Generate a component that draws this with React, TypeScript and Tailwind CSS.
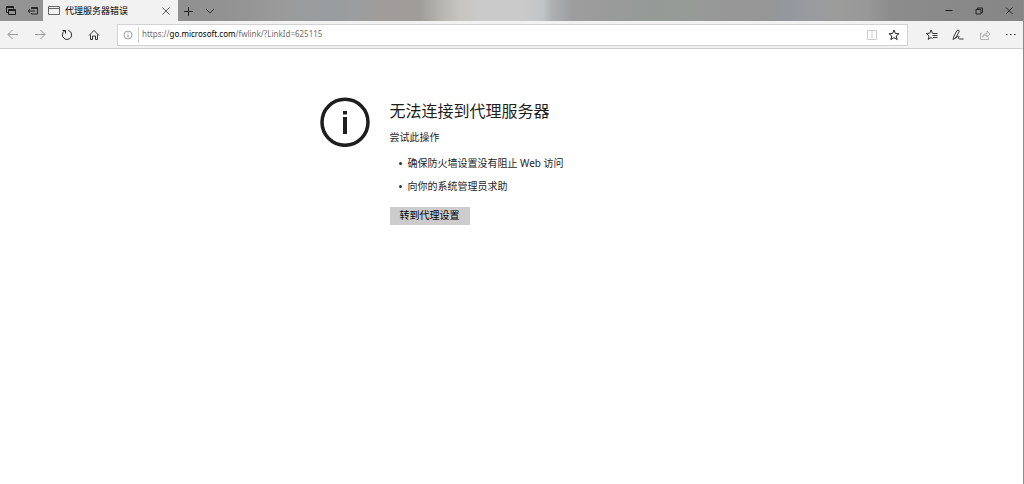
import React from "react";

interface IconProps {
	label: string;
	className?: string;
	disabled?: boolean;
	children: React.ReactNode;
}

const IconButton: React.FC<IconProps> = ({ label, className = "", disabled = false, children }) => (
	<button
		type="button"
		aria-label={label}
		disabled={disabled}
		className={`flex items-center justify-center shrink-0 ${className}`}
	>
		<svg width="12" height="12" viewBox="0 0 12 12" fill="none" stroke="currentColor" aria-hidden="true">
			{children}
		</svg>
	</button>
);

const TitleBar: React.FC = () => (
	<div className="flex h-[21px] text-[#1c1c1c] bg-[linear-gradient(90deg,#949494_0%,#909090_17%,#929292_22%,#9b9b9b_28%,#999da0_33%,#9f9c9b_37%,#9f9d9a_41%,#b5b4ae_43%,#c6c5c0_45%,#cacaca_47%,#cacaca_51%,#c2c5c7_53%,#acafb1_54%,#9d9d9e_56%,#9a9b9a_59%,#959a97_64%,#969b98_67%,#979797_71%,#969696_75%,#95979f_77%,#999ba0_79%,#9c9c9b_82%,#979797_85%,#8c8c8c_87%,#868686_100%)]">
		<IconButton label="Tabs you've set aside" className="w-[22px]">
			<path d="M3.500 7.500H1.500V1.500H8.500V3.500M1.500 2.500H8.500" />
			<path d="M3.500 4.500H10.500V9.500H3.500ZM3.500 5.500H10.500" />
		</IconButton>
		<IconButton label="Set these tabs aside" className="w-[21px]">
			<path strokeWidth="0.900" d="M4.500 4V2.500H10.500V9H4.500V8M4.500 3.500H10.500M1 6H8M3 4L1 6L3 8" />
		</IconButton>
		<div className="flex items-center w-[135px] bg-[#f2f2f2]">
			<span className="flex w-[22px] justify-center shrink-0">
				<svg width="12" height="12" viewBox="0 0 12 12" fill="none" stroke="#666" aria-hidden="true">
					<path d="M0.500 1.500H11.500V9.500H0.500ZM0.500 3.500H11.500" />
				</svg>
			</span>
			<span className="flex-1 text-[9px] leading-3 whitespace-nowrap text-black">代理服务器错误</span>
			<IconButton label="Close tab" className="w-6 text-[#333]">
				<path strokeWidth="0.800" d="M2.500 2.500L9.500 9.500M9.500 2.500L2.500 9.500" />
			</IconButton>
		</div>
		<IconButton label="New tab" className="w-[21px]">
			<path strokeWidth="0.900" d="M5.500 2V11M1 6.500H10" />
		</IconButton>
		<IconButton label="Show tab previews" className="w-[21px]">
			<path strokeWidth="0.800" d="M2 4L6 8L10 4" />
		</IconButton>
		<div className="flex-1" />
		<IconButton label="Minimize" className="w-[30px]">
			<path d="M2.500 5.500H9.500" />
		</IconButton>
		<IconButton label="Restore" className="w-[30px]">
			<path strokeWidth="0.900" d="M3 4.500H8V9H3ZM4.500 4.500V3H9.500V7.500H8" />
		</IconButton>
		<IconButton label="Close window" className="w-[29px]">
			<path strokeWidth="0.900" d="M3 2.500L9.500 9M9.500 2.500L3 9" />
		</IconButton>
	</div>
);

const AddressBar: React.FC = () => (
	<div className="flex flex-1 min-w-0 items-center h-[22px] mr-3 bg-white border border-[#d2d2d2]">
		<IconButton label="Site information" className="w-[21px] h-4 border-r border-[#cfcfcf] text-[#888]">
			<circle cx="6" cy="6" r="4" strokeWidth="0.800" />
			<path strokeWidth="0.900" d="M6 5.500V8.500M6 3.500V4.500" />
		</IconButton>
		<a
			href="https://go.microsoft.com/fwlink/?LinkId=625115"
			className="flex-1 min-w-0 pl-[3px] pb-0.5 text-[8px] leading-3 whitespace-nowrap text-[#707070] font-['Noto_Sans',sans-serif]"
		>
			https://<span className="text-black">go.microsoft.com</span>/fwlink/?LinkId=625115
		</a>
		<IconButton label="Reading view" disabled className="w-[22px] text-[#cccccc]">
			<path d="M1.500 1.500H10.500V10.500H1.500ZM6 1.500V10.500" />
		</IconButton>
		<IconButton label="Add to favorites" className="w-[22px] mr-0.5">
			<path d="M6 1L7.400 4.500L11 4.700L8.200 7L9.200 10.600L6 8.600L2.800 10.600L3.800 7L1 4.700L4.600 4.500Z" />
		</IconButton>
	</div>
);

const Toolbar: React.FC = () => (
	<div className="flex items-center h-7 bg-[#f2f2f2] border-b border-[#cfcfcf] text-[#222]">
		<IconButton label="Back" disabled className="w-[26px] text-[#909090]">
			<path strokeWidth="0.900" d="M11 5.500H1M5.500 1L1 5.500L5.500 10" />
		</IconButton>
		<IconButton label="Forward" disabled className="w-[27px] text-[#909090]">
			<path strokeWidth="0.900" d="M1 5.500H11M6.500 1L11 5.500L6.500 10" />
		</IconButton>
		<IconButton label="Refresh" className="w-[27px]">
			<path d="M7.500 1.500A4.600 4.600 0 1 1 3.500 2M1.500 1.500H4.500V4.500" />
		</IconButton>
		<IconButton label="Home" className="w-[27px] mr-[10px]">
			<path strokeWidth="0.900" d="M1 6.500L6 1.500L11 6.500M2.500 5.500V10.500H4.500V7H7.500V10.500H9.500V5.500" />
		</IconButton>
		<AddressBar />
		<IconButton label="Favorites hub" className="w-[23px]">
			<path
				strokeWidth="0.900"
				d="M7.500 4.500L6.500 4.200L5 1L3.800 4.200L0.500 4.500L3 7L2.200 10.500L5 8.500L6.500 9.500M6.500 4.500H11.500M6.500 6.500H11.500M7 8.500H11.500"
			/>
		</IconButton>
		<IconButton label="Add notes" className="w-[30px]">
			<path
				strokeWidth="0.900"
				d="M1 10.500L2 7L5 1.500Q6 0.500 7 1.500Q7.500 2 7 3L3.500 9L1 10.500M3.500 9.500Q6.500 6 7 7.500Q5.500 10 7.500 10H11.500"
			/>
		</IconButton>
		<IconButton label="Share" disabled className="w-[23px] text-[#a8a8a8]">
			<path
				strokeWidth="0.900"
				d="M3 4H1.500V10.500H9.500V8.500M3.500 8Q4 4.500 8 4.500V2L11 5L8 8V6Q5 6 3.500 8Z"
			/>
		</IconButton>
		<IconButton label="Settings and more" className="w-[27px]">
			<path d="M2 5.500H3.500M6 5.500H7.500M10 5.500H11.500" />
		</IconButton>
	</div>
);

const tips = ["确保防火墙设置没有阻止 Web 访问", "向你的系统管理员求助"];

const ErrorPage: React.FC = () => (
	<main className="flex w-full max-w-96 mx-auto pt-12 gap-5">
		<svg className="shrink-0 size-[50px]" viewBox="0 0 50 50" fill="none" aria-hidden="true">
			<circle cx="25" cy="25.300" r="23" stroke="#1e1e1e" strokeWidth="3.500" />
			<path d="M23 14H27V17.500H23ZM23 20H27V37H23Z" fill="#1e1e1e" />
		</svg>
		<div className="flex-1">
			<h1 className="mt-0.5 text-[16px] leading-6">无法连接到代理服务器</h1>
			<p className="mt-1.5 text-[10px] leading-4">尝试此操作</p>
			<ul className="mt-2.5 ml-[9px] text-[10px] leading-4 font-['Noto_Sans','Noto_Sans_CJK_SC',sans-serif]">
				{tips.map((tip) => (
					<li key={tip} className="flex items-center gap-1.5 mb-[7px]">
						<span className="size-[3px] bg-[#333] rounded-full" />
						{tip}
					</li>
				))}
			</ul>
			<button type="button" className="mt-1 h-[18px] px-2.5 pb-0.5 bg-[#cccccc] text-[10px] leading-4 text-black">
				转到代理设置
			</button>
		</div>
	</main>
);

const App: React.FC = () => (
	<div className="min-h-screen bg-white border-r border-[#8a8a8a] text-[#1e1e1e] font-['Open_Sans','Noto_Sans_CJK_SC',sans-serif]">
		<TitleBar />
		<Toolbar />
		<ErrorPage />
	</div>
);

export default App;
